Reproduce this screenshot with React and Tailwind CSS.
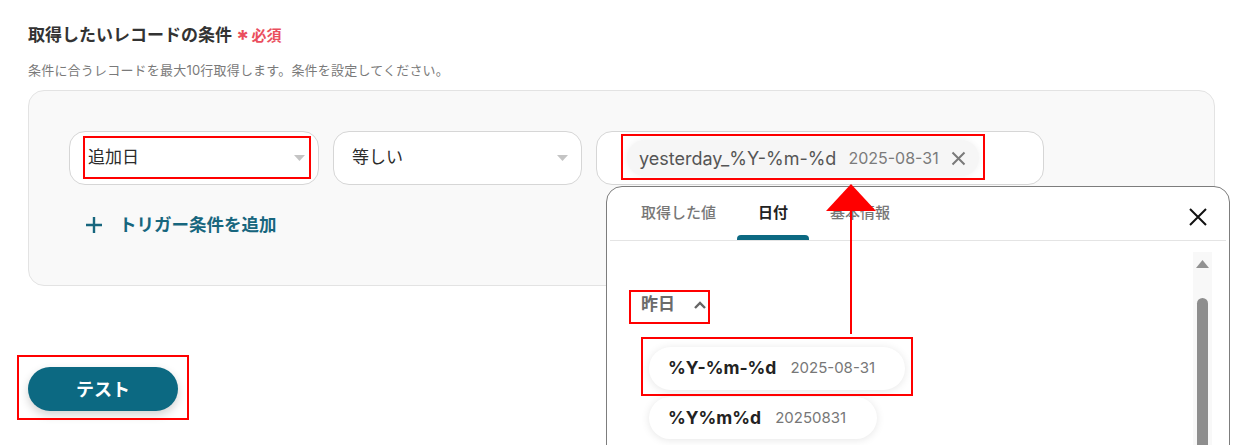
import React from "react";

const font = { fontFamily: "Inter, 'Noto Sans CJK JP', sans-serif" };

function Caret() {
  return (
    <svg width="11" height="6" viewBox="0 0 11 6" className="shrink-0">
      <path d="M0 0 L11 0 L5.5 6 Z" fill="#c4c4c4" />
    </svg>
  );
}

function SelectBox({ label, w }) {
  return (
    <div className={`${w} h-[54px] rounded-[16px] border border-[#d6d6d6] bg-white flex items-center justify-between pl-[18px] pr-[13px]`}>
      <span className="text-[17px] text-[#2b2b2b]">{label}</span>
      <Caret />
    </div>
  );
}

export default function App() {
  return (
    <div className="relative w-[1259px] h-[445px] overflow-hidden bg-white" style={font}>
      <div className="pl-[28px] pt-[26px] w-[1215px]">
        <div className="flex items-center h-[20px]">
          <span className="text-[17px] font-bold text-[#333]">取得したいレコードの条件</span>
          <span className="ml-[4px] text-[24px] text-[#ea4e5d] font-bold leading-none mt-[8px]">*</span>
          <span className="ml-[2px] text-[15px] text-[#ea4e5d] font-bold">必須</span>
        </div>
        <div className="mt-[16px] h-[16px] text-[13px] leading-[16px] tracking-[0.2px] text-[#7a7a7a]">
          条件に合うレコードを最大10行取得します。条件を設定してください。
        </div>
        <div className="mt-[12px] h-[196px] rounded-[16px] border border-[#e3e3e3] bg-[#f9f9f9] p-[40px]">
          <div className="flex gap-[14px]">
            <SelectBox label="追加日" w="w-[250px]" />
            <SelectBox label="等しい" w="w-[249px]" />
            <div className="w-[448px] h-[54px] rounded-[16px] border border-[#d6d6d6] bg-white flex items-center pl-[30px]">
              <div className="h-[36px] rounded-full bg-[#f6f6f6] shadow-[0_0_6px_rgba(0,0,0,0.06)] flex items-center pl-[12px] pr-[13px]">
                <span className="text-[18px] text-[#555]">yesterday_%Y-%m-%d</span>
                <span className="ml-[12px] text-[16px] text-[#7b7b7b]">2025-08-31</span>
                <svg width="15" height="15" viewBox="0 0 15 15" className="ml-[12px]">
                  <path d="M1.5 1.5 L13.5 13.5 M13.5 1.5 L1.5 13.5" stroke="#7a7a7a" strokeWidth="2" />
                </svg>
              </div>
            </div>
          </div>
          <div className="mt-[28px] flex items-center h-[24px] pl-[17px] text-[#17667e]">
            <svg width="16" height="16" viewBox="0 0 16 16">
              <path d="M8 0 V16 M0 8 H16" stroke="#17667e" strokeWidth="2.4" />
            </svg>
            <span className="ml-[17px] text-[17.5px] font-bold">トリガー条件を追加</span>
          </div>
        </div>
        <button className="mt-[81px] w-[150px] h-[44px] rounded-full bg-[#0c6982] text-white text-[18px] font-bold shadow-[0_4px_10px_rgba(0,0,0,0.18)] flex items-center justify-center">
          テスト
        </button>
      </div>

      {/* Popup */}
      <div className="absolute left-[606px] top-[186px] w-[624px] h-[300px] rounded-t-[16px] border border-[#7d7d7d] bg-white">
        <div className="mx-[3px] border-b border-[#e4e4e4] h-[54px] flex items-end relative">
          <div className="flex ml-[10px] h-full">
            <div className="px-[21px] flex items-center text-[15px] font-medium text-[#777]">取得した値</div>
            <div className="relative px-[21px] flex items-center text-[15px] font-bold text-[#222]">
              日付
              <div className="absolute left-0 right-0 bottom-0 h-[5px] rounded-t-[4px] bg-[#0c6982]" />
            </div>
            <div className="px-[21px] flex items-center text-[15px] font-medium text-[#777]">基本情報</div>
          </div>
          <svg width="20" height="20" viewBox="0 0 20 20" className="absolute right-[18px] top-[20px]">
            <path d="M2 2 L18 18 M18 2 L2 18" stroke="#111" strokeWidth="2" />
          </svg>
        </div>
        <div className="flex">
          <div className="flex-1 pl-[34px] pt-[52px]">
            <div className="flex items-center h-[24px]">
              <span className="text-[17px] font-bold text-[#6b6b6b]">昨日</span>
              <svg width="14" height="9" viewBox="0 0 14 9" className="ml-[18px]">
                <path d="M2 7 L7 2 L12 7" stroke="#666" strokeWidth="2.4" fill="none" />
              </svg>
            </div>
            <div className="mt-[30px] flex flex-col items-start gap-[7px] pl-[8px]">
              <div className="w-[256px] h-[43px] rounded-full bg-white shadow-[0_1px_8px_rgba(0,0,0,0.1)] flex items-center pl-[19px]">
                <span className="text-[17.5px] font-bold text-[#222]">%Y-%m-%d</span>
                <span className="ml-[14px] text-[15px] text-[#777]">2025-08-31</span>
              </div>
              <div className="w-[228px] h-[42px] rounded-full bg-white shadow-[0_1px_8px_rgba(0,0,0,0.1)] flex items-center pl-[19px]">
                <span className="text-[17.5px] font-bold text-[#222]">%Y%m%d</span>
                <span className="ml-[14px] text-[15px] text-[#777]">20250831</span>
              </div>
            </div>
          </div>
          <div className="w-[19px] mr-[17px] mt-[11px] h-[200px] bg-[#f8f8f8] flex flex-col items-center">
            <svg width="13" height="8" viewBox="0 0 13 8" className="mt-[8px]">
              <path d="M0 8 L6.5 0 L13 8 Z" fill="#929292" />
            </svg>
            <div className="mt-[30px] w-[11px] flex-1 rounded-t-full bg-[#8e8e8e]" />
          </div>
        </div>
      </div>

      {/* Annotations */}
      <div className="absolute left-[83px] top-[136px] w-[228px] h-[43px] border-2 border-[#f00]" />
      <div className="absolute left-[621px] top-[134px] w-[364px] h-[46px] border-2 border-[#f00]" />
      <div className="absolute left-[629px] top-[290px] w-[81px] h-[34px] border-2 border-[#f00]" />
      <div className="absolute left-[641px] top-[337px] w-[272px] h-[59px] border-2 border-[#f00]" />
      <div className="absolute left-[17px] top-[355px] w-[172px] h-[65px] border-2 border-[#f00]" />
      <svg className="absolute left-[820px] top-[180px]" width="62" height="156" viewBox="0 0 62 156">
        <path d="M31 4 L56 31 L6 31 Z" fill="#f00" />
        <rect x="30" y="30" width="2" height="124" fill="#f00" />
      </svg>
    </div>
  );
}
